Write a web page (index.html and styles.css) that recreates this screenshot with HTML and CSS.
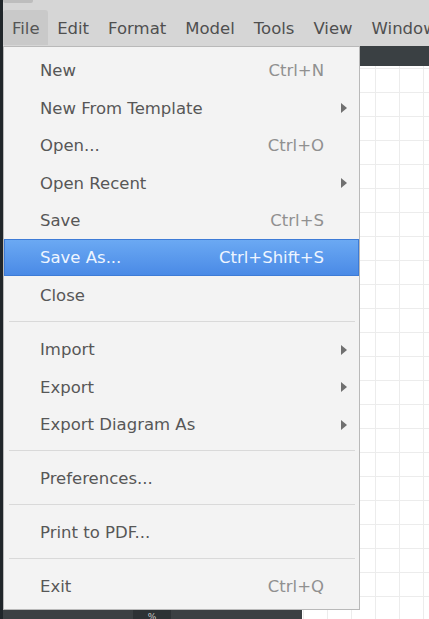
FILE: index.html
```html
<!DOCTYPE html>
<html>
<head>
<meta charset="utf-8">
<link rel="stylesheet" href="styles.css">
</head>
<body>
<div class="app">
  <div class="menubar">
    <div class="nub"></div>
    <div class="mb-item active">File</div>
    <div class="mb-item">Edit</div>
    <div class="mb-item">Format</div>
    <div class="mb-item">Model</div>
    <div class="mb-item">Tools</div>
    <div class="mb-item">View</div>
    <div class="mb-item">Window</div>
  </div>
  <div class="workspace">
    <div class="sidebar">
      <div class="tab">%</div>
    </div>
    <div class="main">
      <div class="toolbar"></div>
      <div class="canvas"></div>
    </div>
  </div>

  <div class="dropdown">
    <div class="item"><span class="label">New</span><span class="sc">Ctrl+N</span></div>
    <div class="item"><span class="label">New From Template</span><span class="arrow"></span></div>
    <div class="item"><span class="label">Open...</span><span class="sc">Ctrl+O</span></div>
    <div class="item"><span class="label">Open Recent</span><span class="arrow"></span></div>
    <div class="item"><span class="label">Save</span><span class="sc">Ctrl+S</span></div>
    <div class="item hl"><span class="label">Save As...</span><span class="sc">Ctrl+Shift+S</span></div>
    <div class="item"><span class="label">Close</span></div>
    <div class="sep"></div>
    <div class="item"><span class="label">Import</span><span class="arrow"></span></div>
    <div class="item"><span class="label">Export</span><span class="arrow"></span></div>
    <div class="item"><span class="label">Export Diagram As</span><span class="arrow"></span></div>
    <div class="sep"></div>
    <div class="item"><span class="label">Preferences...</span></div>
    <div class="sep"></div>
    <div class="item"><span class="label">Print to PDF...</span></div>
    <div class="sep"></div>
    <div class="item"><span class="label">Exit</span><span class="sc">Ctrl+Q</span></div>
  </div>
</div>
</body>
</html>
```
FILE: styles.css
```css
* { box-sizing: border-box; }
html, body {
  margin: 0;
  padding: 0;
}
body {
  width: 429px;
  height: 619px;
  overflow: hidden;
  background: #20262a;
  font-family: "DejaVu Sans", sans-serif;
  font-size: 16.5px;
}
.app {
  position: relative;
  margin-left: 3px;
  height: 619px;
  display: flex;
  flex-direction: column;
}
.menubar {
  position: relative;
  height: 46px;
  flex: none;
  background: #d6d6d6;
  display: flex;
  align-items: flex-end;
  padding-bottom: 1px;
  white-space: nowrap;
  overflow: hidden;
}
.nub {
  position: absolute;
  left: 0;
  top: 0;
  width: 30px;
  height: 3px;
  background: #bdbdbd;
  border-radius: 0 0 2px 2px;
}
.mb-item {
  height: 35px;
  padding: 0 9.5px;
  line-height: 37px;
  color: #4f4f4f;
  border-radius: 3px 3px 0 0;
  flex: none;
}
.mb-item.active {
  padding: 0 8px 0 9px;
  background: #c9c9c9;
  color: #555555;
}
.workspace {
  flex: 1;
  display: flex;
  min-height: 0;
}
.sidebar {
  width: 299px;
  flex: none;
  background: #3b4043;
  display: flex;
  flex-direction: column;
  justify-content: flex-end;
}
.tab {
  margin-left: 130px;
  width: 38px;
  height: 10px;
  background: #2d3235;
  color: #c8c8c8;
  font-size: 9px;
  line-height: 16px;
  text-align: center;
  overflow: hidden;
}
.main {
  flex: 1;
  display: flex;
  flex-direction: column;
}
.toolbar {
  height: 20px;
  flex: none;
  background: #3a4043;
}
.canvas {
  flex: 1;
  background-color: #ffffff;
  background-image:
    linear-gradient(to right, #ececec 1px, transparent 1px),
    linear-gradient(to bottom, #ececec 1px, transparent 1px);
  background-size: 24px 24px;
  background-position: 1px 2px;
}
.dropdown {
  position: absolute;
  left: 0;
  top: 46px;
  width: 357px;
  height: 564px;
  background: #f3f3f3;
  border: 1px solid #b9b9b9;
  padding: 4px 0;
  display: flex;
  flex-direction: column;
}
.item {
  height: 37.5px;
  flex: none;
  display: flex;
  align-items: center;
  padding: 2px 12px 0 36px;
  color: #575757;
  white-space: nowrap;
}
.item .label { flex: 1; }
.item .sc {
  color: #909090;
  margin-right: 23px;
}
.item .arrow {
  width: 0;
  height: 0;
  border-top: 5px solid transparent;
  border-bottom: 5px solid transparent;
  border-left: 6px solid #707070;
}
.item.hl {
  background: linear-gradient(to bottom, #6ba9f3, #4a8ae6);
  border: 1px solid #3d7bd6;
  color: #eef5ff;
  padding: 1px 11px 0 35px;
}
.item.hl .sc {
  color: #eef5ff;
}
.sep {
  height: 16.5px;
  flex: none;
  display: flex;
  align-items: center;
  padding: 0 4px 0 5px;
}
.sep::before {
  content: "";
  flex: 1;
  height: 1px;
  background: #d9d9d9;
}
```
